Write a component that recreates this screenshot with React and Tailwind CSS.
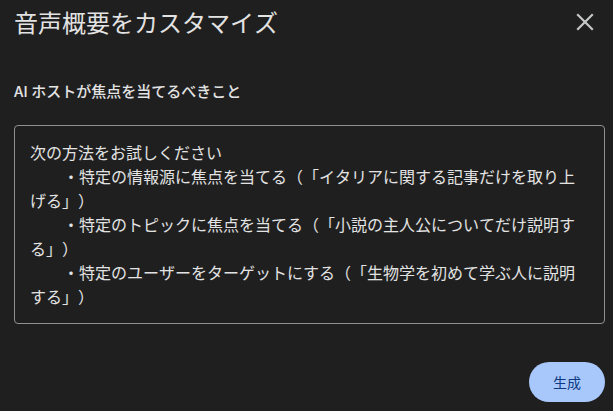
import React from "react";

const items = [
  "・特定の情報源に焦点を当てる（「イタリアに関する記事だけを取り上げる」）",
  "・特定のトピックに焦点を当てる（「小説の主人公についてだけ説明する」）",
  "・特定のユーザーをターゲットにする（「生物学を初めて学ぶ人に説明する」）",
];

export default function App() {
  return (
    <div
      className="h-[411px] w-[613px] overflow-hidden bg-[#1f1f1f] text-[#e3e3e3] flex flex-col pt-[6px] pl-[14px] pr-[8px] [text-spacing-trim:space-all] [font-kerning:none]"
      style={{ fontFamily: '"Noto Sans CJK JP", "Noto Sans", sans-serif' }}
    >
      {/* Header */}
      <div className="flex items-center justify-between h-[32px]">
        <h1 className="text-[24px] leading-[32px] font-normal text-[#e3e3e3]">
          音声概要をカスタマイズ
        </h1>
        <button className="mr-[6px] text-[#c4c7c5]">
          <svg width="28" height="28" viewBox="0 0 24 24" fill="none" stroke="currentColor" strokeWidth="1.9" strokeLinecap="square">
            <path d="M18 6 6 18" />
            <path d="m6 6 12 12" />
          </svg>
        </button>
      </div>

      {/* Label */}
      <div className="mt-[43px] text-[15px] leading-[20px] font-medium text-[#e3e3e3]">
        AI ホストが焦点を当てるべきこと
      </div>

      {/* Textarea-like box */}
      <div className="mt-[24px] h-[199px] rounded-[4px] border border-[#8e918f] px-[15px] pt-[14px] text-[16px] leading-[24px] text-[#e3e3e3]">
        <div>次の方法をお試しください</div>
        {items.map((t) => (
          <div key={t}>
            <span className="inline-block w-[33px]"></span>
            {t}
          </div>
        ))}
      </div>

      {/* Footer */}
      <div className="mt-[38px] flex justify-end">
        <button className="h-[40px] w-[76px] rounded-full bg-[#a8c7fa] text-[#0b3a82] text-[14px] font-normal">
          生成
        </button>
      </div>
    </div>
  );
}
